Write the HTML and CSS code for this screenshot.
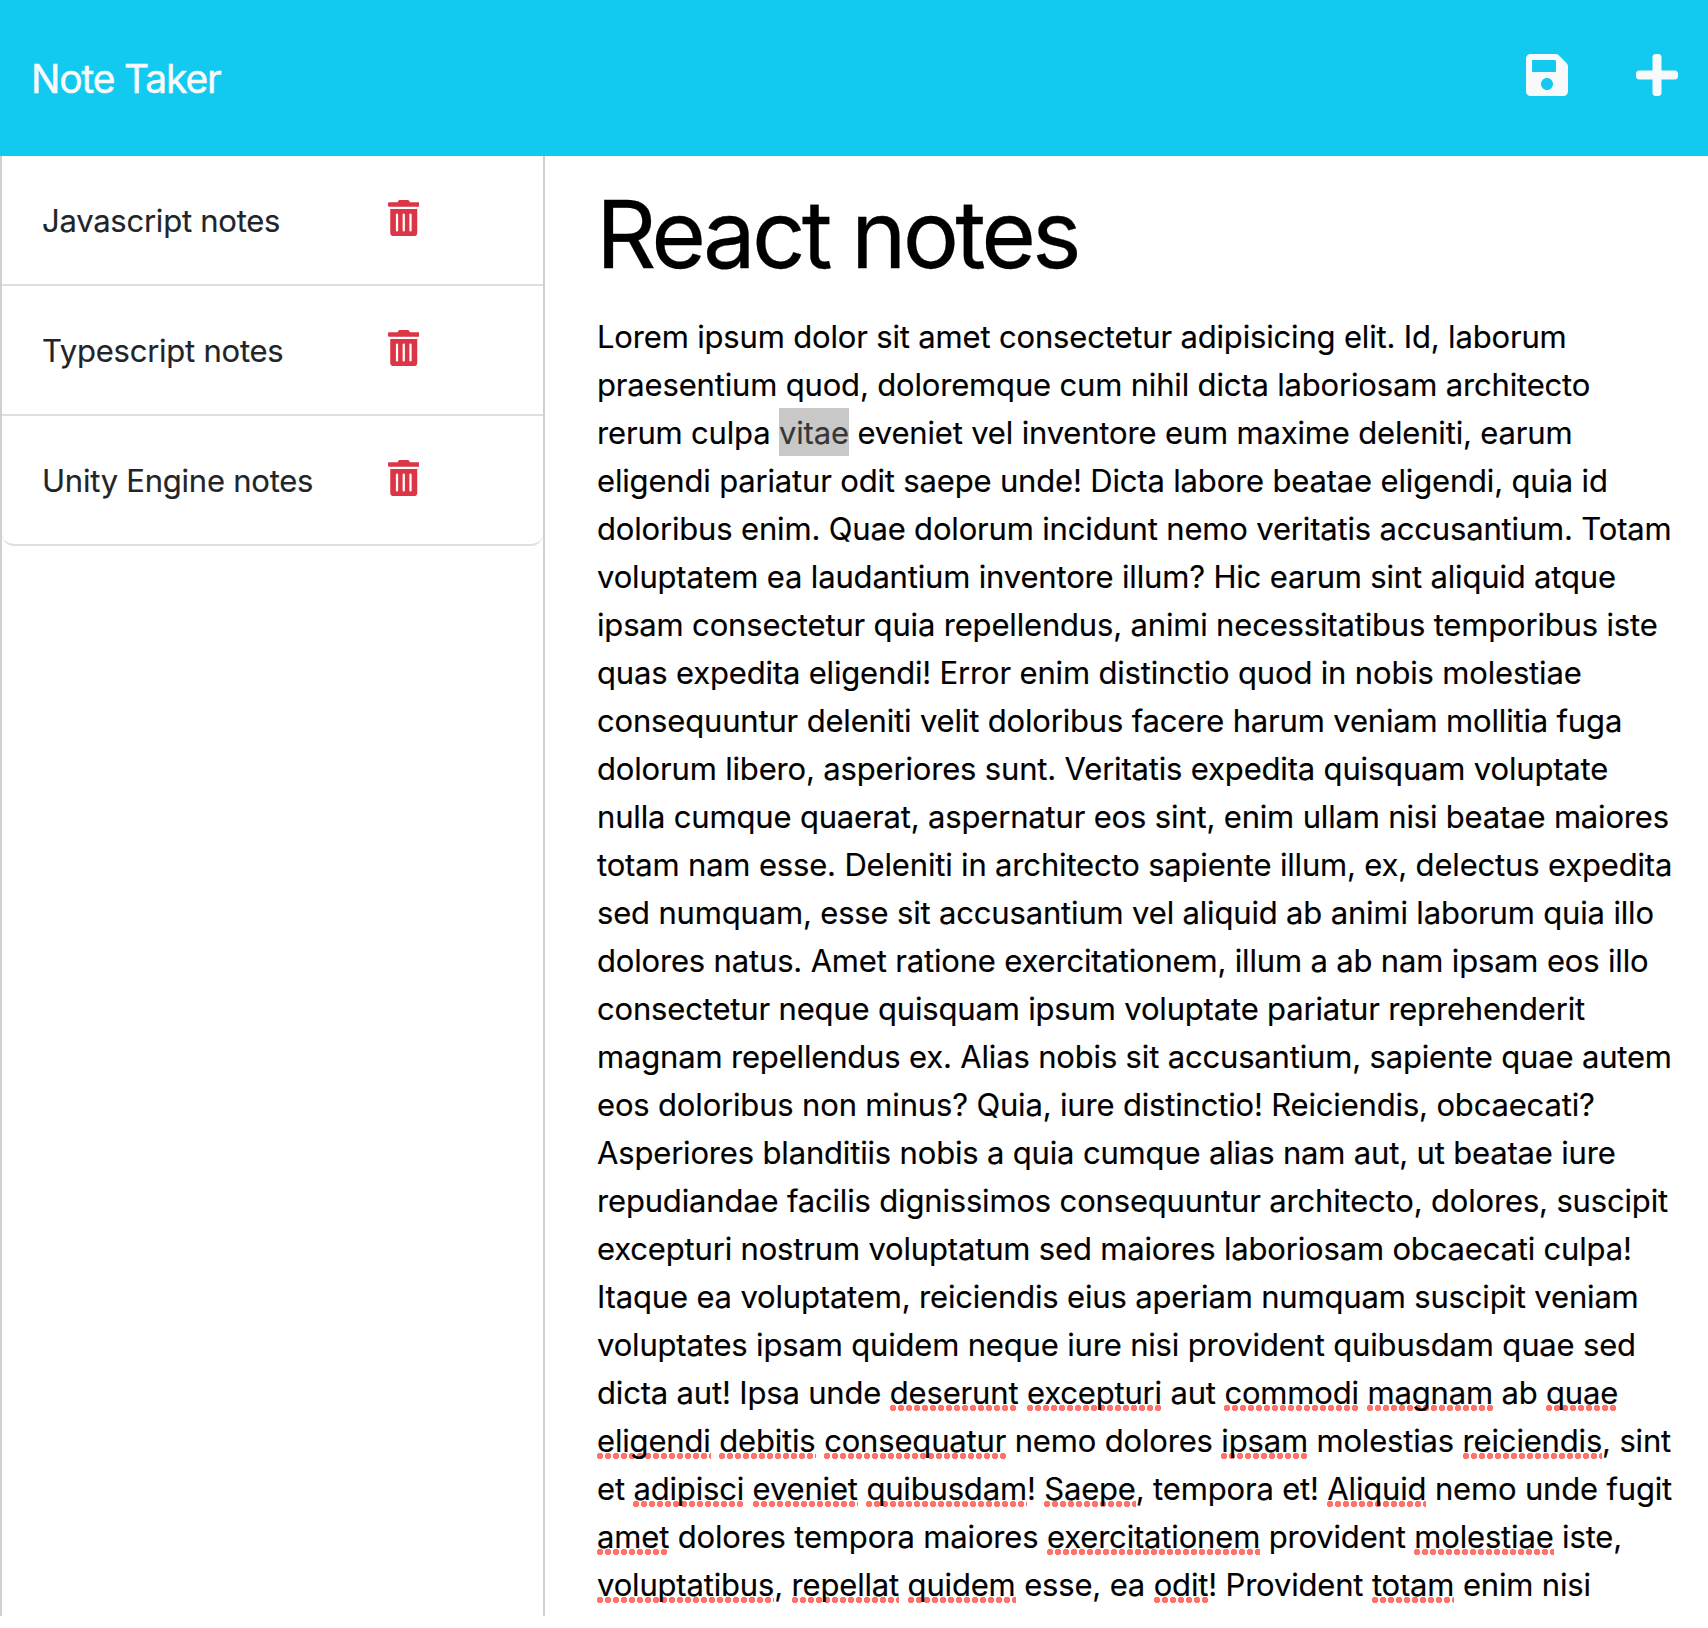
FILE: index.html
```html
<!DOCTYPE html>
<html lang="en">
<head>
<meta charset="utf-8">
<title>Note Taker</title>
<link rel="stylesheet" href="styles.css">
</head>
<body>
<svg class="sprite" aria-hidden="true">
<symbol id="trash" viewBox="0 0 448 512"><path d="M32 464a48 48 0 0 0 48 48h288a48 48 0 0 0 48-48V128H32zm272-256a16 16 0 0 1 32 0v224a16 16 0 0 1-32 0zm-96 0a16 16 0 0 1 32 0v224a16 16 0 0 1-32 0zm-96 0a16 16 0 0 1 32 0v224a16 16 0 0 1-32 0zM432 32H312l-9.4-18.7A24 24 0 0 0 281.1 0H166.8a23.72 23.72 0 0 0-21.4 13.3L136 32H16A16 16 0 0 0 0 48v32a16 16 0 0 0 16 16h416a16 16 0 0 0 16-16V48a16 16 0 0 0-16-16z"/></symbol>
</svg>
<header class="navbar">
<span class="brand">Note Taker</span>
<div class="actions">
<svg class="action" viewBox="0 0 448 512"><path d="M433.941 129.941l-83.882-83.882A48 48 0 0 0 316.118 32H48C21.49 32 0 53.49 0 80v352c0 26.51 21.49 48 48 48h352c26.51 0 48-21.49 48-48V163.882a48 48 0 0 0-14.059-33.941zM224 416c-35.346 0-64-28.654-64-64 0-35.346 28.654-64 64-64s64 28.654 64 64c0 35.346-28.654 64-64 64zm96-304.52V212c0 6.627-5.373 12-12 12H76c-6.627 0-12-5.373-12-12V108c0-6.627 5.373-12 12-12h228.52c3.183 0 6.235 1.264 8.485 3.515l3.48 3.48A11.996 11.996 0 0 1 320 111.48z"/></svg>
<svg class="action" viewBox="0 0 448 512"><path d="M416 208H272V64c0-17.67-14.33-32-32-32h-32c-17.67 0-32 14.33-32 32v144H32c-17.67 0-32 14.33-32 32v32c0 17.67 14.33 32 32 32h144v144c0 17.67 14.33 32 32 32h32c17.67 0 32-14.33 32-32V304h144c17.67 0 32-14.33 32-32v-32c0-17.67-14.33-32-32-32z"/></svg>
</div>
</header>
<div class="layout">
<aside class="sidebar">
<ul class="notes">
<li class="note"><span class="note-title">Javascript notes</span><svg class="trash"><use href="#trash"/></svg></li>
<li class="note"><span class="note-title">Typescript notes</span><svg class="trash"><use href="#trash"/></svg></li>
<li class="note"><span class="note-title">Unity Engine notes</span><svg class="trash"><use href="#trash"/></svg></li>
</ul>
</aside>
<main class="editor">
<h1 class="heading">React notes</h1>
<p class="body">Lorem ipsum dolor sit amet consectetur adipisicing elit. Id, laborum
praesentium quod, doloremque cum nihil dicta laboriosam architecto
rerum culpa <mark class="selected">vitae</mark> eveniet vel inventore eum maxime deleniti, earum
eligendi pariatur odit saepe unde! Dicta labore beatae eligendi, quia id
doloribus enim. Quae dolorum incidunt nemo veritatis accusantium. Totam
voluptatem ea laudantium inventore illum? Hic earum sint aliquid atque
ipsam consectetur quia repellendus, animi necessitatibus temporibus iste
quas expedita eligendi! Error enim distinctio quod in nobis molestiae
consequuntur deleniti velit doloribus facere harum veniam mollitia fuga
dolorum libero, asperiores sunt. Veritatis expedita quisquam voluptate
nulla cumque quaerat, aspernatur eos sint, enim ullam nisi beatae maiores
totam nam esse. Deleniti in architecto sapiente illum, ex, delectus expedita
sed numquam, esse sit accusantium vel aliquid ab animi laborum quia illo
dolores natus. Amet ratione exercitationem, illum a ab nam ipsam eos illo
consectetur neque quisquam ipsum voluptate pariatur reprehenderit
magnam repellendus ex. Alias nobis sit accusantium, sapiente quae autem
eos doloribus non minus? Quia, iure distinctio! Reiciendis, obcaecati?
Asperiores blanditiis nobis a quia cumque alias nam aut, ut beatae iure
repudiandae facilis dignissimos consequuntur architecto, dolores, suscipit
excepturi nostrum voluptatum sed maiores laboriosam obcaecati culpa!
Itaque ea voluptatem, reiciendis eius aperiam numquam suscipit veniam
voluptates ipsam quidem neque iure nisi provident quibusdam quae sed
dicta aut! Ipsa unde <span class="misspelt">deserunt</span> <span class="misspelt">excepturi</span> aut <span class="misspelt">commodi</span> <span class="misspelt">magnam</span> ab <span class="misspelt">quae</span>
<span class="misspelt">eligendi</span> <span class="misspelt">debitis</span> <span class="misspelt">consequatur</span> nemo dolores <span class="misspelt">ipsam</span> molestias <span class="misspelt">reiciendis</span>, sint
et <span class="misspelt">adipisci</span> <span class="misspelt">eveniet</span> <span class="misspelt">quibusdam</span>! <span class="misspelt">Saepe</span>, tempora et! <span class="misspelt">Aliquid</span> nemo unde fugit
<span class="misspelt">amet</span> dolores tempora maiores <span class="misspelt">exercitationem</span> provident <span class="misspelt">molestiae</span> iste,
<span class="misspelt">voluptatibus</span>, <span class="misspelt">repellat</span> <span class="misspelt">quidem</span> esse, ea <span class="misspelt">odit</span>! Provident <span class="misspelt">totam</span> enim nisi</p>
</main>
</div>
</body>
</html>
```
FILE: styles.css
```css
* { box-sizing: border-box; }
body {
  margin: 0;
  height: 1628px;
  overflow: hidden;
  background: #fff;
  color: #212529;
  font-family: Inter, "Liberation Sans", sans-serif;
  font-size: 31px;
  line-height: 48px;
  -webkit-text-stroke: 0.15px currentColor;
}
.sprite { display: none; }
.navbar {
  display: flex;
  justify-content: space-between;
  height: 156px;
  padding: 51px 30px 0 31px;
  background: #12caf0;
  color: #f8f9fa;
}
.brand {
  padding-top: 4px;
  font-size: 39px;
  letter-spacing: -1.15px;
  -webkit-text-stroke-width: 0.5px;
}
.actions { display: flex; gap: 68.5px; }
.action { width: 42px; height: 48px; fill: currentColor; }
.layout { display: flex; }
.sidebar {
  width: 545px;
  height: 1460px;
  border: solid #d0d0d0;
  border-width: 0 2px;
}
.notes {
  margin: 0;
  padding: 0;
  list-style: none;
  border-bottom: 2px solid #dfdfdf;
  border-radius: 0 0 12px 12px;
}
.note {
  display: flex;
  height: 130px;
  padding: 41px 0 0 40px;
}
.note + .note { border-top: 2px solid #dfdfdf; }
.note:first-child { height: 128px; }
.note-title { width: 345.5px; letter-spacing: -0.24px; }
.trash { width: 31.5px; height: 36px; margin-top: 3.4px; fill: #dc3545; }
.editor { flex: 1; padding: 20px 0 0 52px; color: #000; }
.heading {
  margin: 0 0 21px -1px;
  font-size: 94px;
  font-weight: 400;
  line-height: 116px;
  letter-spacing: -3.9px;
  -webkit-text-stroke-width: 0.3px;
}
.body { margin: 0; white-space: pre; letter-spacing: -0.17px; }
.selected { padding: 6px 0 5px; background: #c8c8c8; color: #363636; }
.misspelt {
  background: radial-gradient(circle at 3px 3px, #ff7269 2.9px, transparent 3.5px) left bottom / 8px 6px repeat-x;
}
```
